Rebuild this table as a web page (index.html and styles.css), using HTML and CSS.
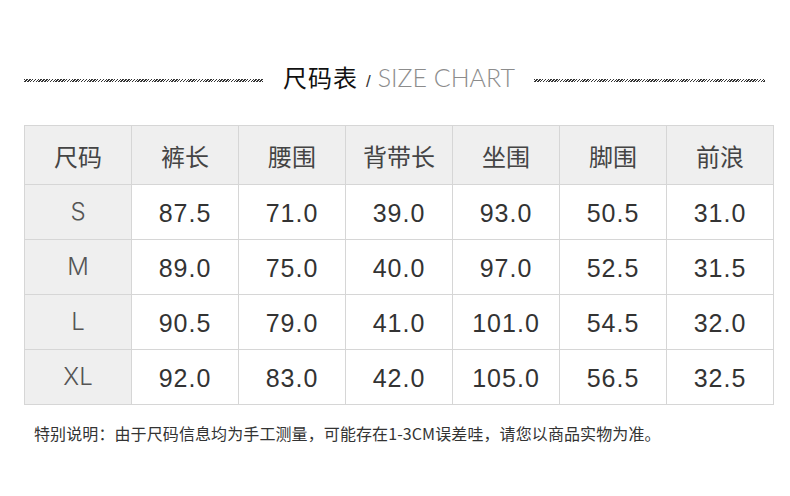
FILE: index.html
```html
<!DOCTYPE html>
<html>
<head>
<meta charset="utf-8">
<link rel="stylesheet" href="styles.css">
</head>
<body>
<div class="page">
  <div class="title-bar">
    <div class="hatch hatch-left"></div>
    <div class="title">
      <span class="title-cn">尺码表</span>
      <span class="slash">/</span>
      <span class="title-en">SIZE CHART</span>
    </div>
    <div class="hatch hatch-right"></div>
  </div>
  <table class="chart">
    <thead>
      <tr><th>尺码</th><th>裤长</th><th>腰围</th><th>背带长</th><th>坐围</th><th>脚围</th><th>前浪</th></tr>
    </thead>
    <tbody>
      <tr><td class="size">S</td><td>87.5</td><td>71.0</td><td>39.0</td><td>93.0</td><td>50.5</td><td>31.0</td></tr>
      <tr><td class="size">M</td><td>89.0</td><td>75.0</td><td>40.0</td><td>97.0</td><td>52.5</td><td>31.5</td></tr>
      <tr><td class="size">L</td><td>90.5</td><td>79.0</td><td>41.0</td><td>101.0</td><td>54.5</td><td>32.0</td></tr>
      <tr><td class="size">XL</td><td>92.0</td><td>83.0</td><td>42.0</td><td>105.0</td><td>56.5</td><td>32.5</td></tr>
    </tbody>
  </table>
  <p class="note">特别说明：由于尺码信息均为手工测量，可能存在1-3CM误差哇，请您以商品实物为准。</p>
</div>
</body>
</html>
```
FILE: styles.css
```css
html, body {
  margin: 0;
  padding: 0;
  background: #fff;
}
body {
  width: 790px;
  height: 496px;
  overflow: hidden;
  font-family: "Liberation Sans", "Noto Sans CJK SC", sans-serif;
}
.page {
  padding: 58px 16px 0 24px;
}
.title-bar {
  display: flex;
  align-items: center;
  height: 36px;
}
.hatch {
  height: 3px;
  margin-top: 8px;
  background: repeating-linear-gradient(135deg, #333 0 1px, #fff 1px 2px);
}
.hatch-left {
  width: 239px;
  margin-right: 20px;
}
.hatch-right {
  width: 231px;
  margin-left: 19px;
}
.title {
  display: flex;
  align-items: baseline;
  white-space: nowrap;
}
.title-cn {
  font-family: "Noto Sans CJK SC", sans-serif;
  font-size: 24px;
  color: #111;
  letter-spacing: 1px;
}
.slash {
  font-family: "Liberation Sans", sans-serif;
  font-size: 17px;
  color: #333;
  margin: 0 7px 0 8px;
}
.title-en {
  font-family: "Lato", sans-serif;
  font-weight: 300;
  font-size: 25px;
  color: #8c8c8c;
  letter-spacing: 0;
}
.chart {
  margin-top: 31px;
  width: 750px;
  border-collapse: collapse;
  table-layout: fixed;
  border: 1px solid #d6d6d6;
}
.chart th, .chart td {
  border: 1px solid #d6d6d6;
  text-align: center;
  padding: 0;
}
.chart th {
  height: 58px;
  background: #efefef;
  font-family: "Noto Sans CJK SC", sans-serif;
  font-weight: 400;
  font-size: 24px;
  color: #444;
}
.chart td {
  height: 52px;
  padding-top: 2px;
  font-family: "Liberation Sans", "Noto Sans CJK SC", sans-serif;
  font-size: 25px;
  letter-spacing: 1px;
  color: #333;
}
.chart td.size {
  background: #efefef;
  font-family: "Inter", "Liberation Sans", sans-serif;
  font-weight: 300;
  color: #555;
  font-size: 24px;
  letter-spacing: 0;
  padding-top: 0;
  padding-bottom: 2px;
}
.note {
  margin: 16px 0 0 10px;
  font-family: "Noto Sans CJK SC", sans-serif;
  font-size: 16px;
  letter-spacing: 0.1px;
  color: #333;
}
```
